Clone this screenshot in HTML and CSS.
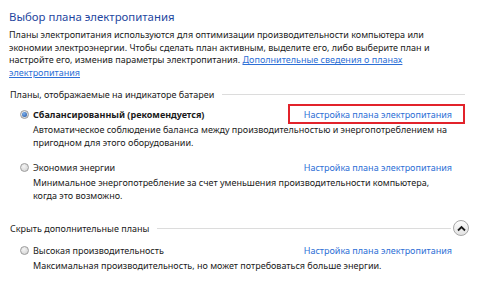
FILE: index.html
```html
<!DOCTYPE html>
<html lang="ru">
<head>
    <meta charset="UTF-8">
    <meta name="viewport" content="width=device-width, initial-scale=1.0">
    <title>Выбор плана электропитания</title>
    <link rel="stylesheet" href="styles.css">
</head>
<body>

<div class="page">
    <h1 class="title">Выбор плана электропитания</h1>
    <p class="intro">
        Планы электропитания используются для оптимизации производительности компьютера или<br>
        экономии электроэнергии. Чтобы сделать план активным, выделите его, либо выберите план и<br>
        настройте его, изменив параметры электропитания. <a href="#about">Дополнительные сведения о планах<br>
        электропитания</a>
    </p>

    <div class="group-head">
        <span>Планы, отображаемые на индикаторе батареи</span>
        <span class="rule"></span>
    </div>

    <div class="plan">
        <div class="plan-row">
            <span class="radio checked"></span>
            <span class="plan-name bold">Сбалансированный (рекомендуется)</span>
            <a href="#balanced" class="plan-link boxed">Настройка плана электропитания</a>
        </div>
        <p class="plan-desc">
            Автоматическое соблюдение баланса между производительностью и энергопотреблением на<br>
            пригодном для этого оборудовании.
        </p>
    </div>

    <div class="plan">
        <div class="plan-row">
            <span class="radio"></span>
            <span class="plan-name">Экономия энергии</span>
            <a href="#saver" class="plan-link">Настройка плана электропитания</a>
        </div>
        <p class="plan-desc">
            Минимальное энергопотребление за счет уменьшения производительности компьютера,<br>
            когда это возможно.
        </p>
    </div>

    <div class="group-head more">
        <span>Скрыть дополнительные планы</span>
        <span class="rule"></span>
        <button class="toggle" title="Скрыть">
            <svg width="9" height="7" viewBox="0 0 9 7"><path d="M1 5.5 L4.5 2 L8 5.5" fill="none" stroke="#1c1c1c" stroke-width="1.8"/></svg>
        </button>
    </div>

    <div class="plan">
        <div class="plan-row">
            <span class="radio"></span>
            <span class="plan-name">Высокая производительность</span>
            <a href="#high" class="plan-link">Настройка плана электропитания</a>
        </div>
        <p class="plan-desc">
            Максимальная производительность, но может потребоваться больше энергии.
        </p>
    </div>
</div>

</body>
</html>
```

FILE: styles.css
```css
body {
    margin: 0;
    padding: 0;
    background-color: #fff;
    color: #1a1a1a;
    font-family: "Noto Sans", "Open Sans", sans-serif;
    font-size: 9px;
}

.page {
    padding: 6px 13px 0 9px;
}

.title {
    margin: 0;
    font-size: 11.4px;
    font-weight: normal;
    line-height: 22px;
    color: #1f47a0;
}

.intro {
    margin: 1px 0 0 0;
    line-height: 12.5px;
}

a, a:visited {
    color: #2d6fd6;
    text-decoration: none;
}

.intro a {
    text-decoration: underline;
}

.group-head {
    display: flex;
    align-items: center;
    height: 14px;
    margin: 8px 0 3px 1px;
}

.group-head .rule {
    flex: 1;
    height: 1px;
    margin-left: 8px;
    margin-right: 4px;
    background-color: #dcdcdc;
}

.group-head.more {
    height: 18px;
    margin-top: 17px;
}

.group-head.more .rule {
    margin-right: 2px;
}

.toggle {
    width: 16px;
    height: 16px;
    padding: 0;
    border: 1px solid #a7a7a7;
    border-radius: 50%;
    background: linear-gradient(#fdfdfd, #e2e2e2);
    display: flex;
    align-items: center;
    justify-content: center;
    cursor: pointer;
}

.plan-row {
    display: flex;
    align-items: center;
    height: 20px;
    padding-left: 11px;
    padding-right: 4px;
}

.radio {
    width: 9px;
    height: 9px;
    box-sizing: border-box;
    border: 1px solid #9c9c9c;
    border-radius: 50%;
    background: radial-gradient(circle at 40% 35%, #f4f4f4, #cfcfcf);
    margin-right: 4px;
    position: relative;
}

.radio.checked::after {
    content: "";
    position: absolute;
    left: 1px;
    top: 1px;
    width: 5px;
    height: 5px;
    border-radius: 50%;
    background: radial-gradient(circle at 40% 35%, #7fb2ee, #1b4f9e);
}

.plan-name {
    flex: 1;
}

.bold {
    font-weight: bold;
}

.plan-link {
    height: 20px;
    box-sizing: border-box;
    padding: 0 11px 0 14px;
    border: 2px solid transparent;
    display: flex;
    align-items: center;
}

.plan-link.boxed {
    border-color: #e2232b;
}

.plan-desc {
    margin: 0 0 8px 0;
    padding-left: 24px;
    line-height: 12.5px;
}
```
